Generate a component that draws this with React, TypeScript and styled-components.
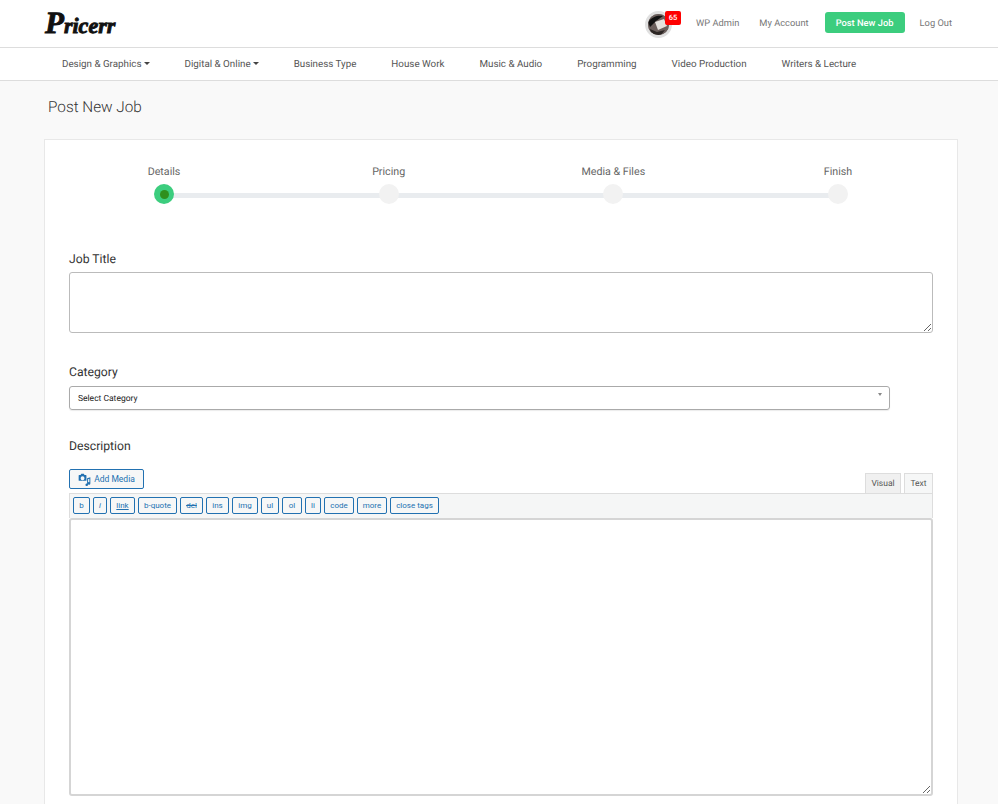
import React from "react";
import styled, { createGlobalStyle } from "styled-components";

const GlobalStyle = createGlobalStyle`
  html, body { margin: 0; padding: 0; height: 100%; overflow: hidden; background: #f9f9f9; }
  * { box-sizing: border-box; }
  body {
    font-family: Roboto, "Liberation Sans", sans-serif;
    color: #444;
    text-rendering: geometricPrecision;
  }
`;

const Page = styled.div`
  height: 804px;
  overflow: hidden;
`;

const Header = styled.header`
  height: 48px;
  background: #fff;
  border-bottom: 1px solid #ddd;
  display: flex;
  align-items: center;
  padding: 0 46px 0 45px;
`;

const Logo = styled.div`
  font-family: "Liberation Serif", serif;
  font-style: italic;
  font-weight: 700;
  font-size: 22px;
  line-height: 30px;
  color: #111;
  -webkit-text-stroke: 0.9px #111;
  margin-top: 2px;

  &::first-letter {
    font-size: 31px;
  }
`;

const HeaderRight = styled.div`
  margin-left: auto;
  margin-top: -2px;
  display: flex;
  align-items: center;
`;

const AvatarWrap = styled.div`
  position: relative;
  width: 27px;
  height: 27px;
  margin: 4px 24px 0 0;
`;

const Avatar = styled.div`
  width: 27px;
  height: 27px;
  border-radius: 50%;
  border: 3px solid #e0e0e0;
  overflow: hidden;
  background: #6b5f5c;
`;

const Badge = styled.span`
  position: absolute;
  top: 0;
  left: 20px;
  width: 16px;
  height: 14px;
  background: #fe0000;
  color: #fff;
  border-radius: 2px;
  font-size: 7.5px;
  font-weight: 500;
  line-height: 14px;
  text-align: center;
`;

const TopLink = styled.a<{ $gap?: number }>`
  font-size: 9.3px;
  color: #777;
  padding-top: 2px;
  margin-right: ${(p) => p.$gap ?? 0}px;
`;

const PostButton = styled.a`
  height: 21px;
  width: 80px;
  border-radius: 3px;
  background: #3ccd7e;
  color: #fff;
  font-size: 9.3px;
  font-weight: 500;
  line-height: 23px;
  text-align: center;
  margin-right: 15px;
`;

const Nav = styled.nav`
  height: 33px;
  background: #fff;
  border-bottom: 1px solid #ddd;
  display: flex;
  align-items: center;
  gap: 35px;
  padding: 0 62px;
`;

const NavItem = styled.a<{ $caret?: boolean }>`
  font-size: 9.8px;
  color: #555;
  white-space: nowrap;
  display: flex;
  align-items: center;

  ${(p) =>
    p.$caret &&
    `&::after {
      content: "";
      margin-left: 2px;
      border-top: 3px solid #444;
      border-left: 3px solid transparent;
      border-right: 3px solid transparent;
      margin-top: -2px;
    }`}
`;

const Title = styled.h1`
  margin: 0;
  padding: 16px 0 0 48px;
  height: 58px;
  font-size: 15.3px;
  line-height: 20px;
  font-weight: 300;
  color: #333;
`;

const Card = styled.section`
  margin: 0 40px 0 44px;
  background: #fff;
  border: 1px solid #e8e8e8;
  padding: 24px 24px 40px;
`;

const Steps = styled.div`
  position: relative;
  display: flex;
  justify-content: space-between;
  margin: 0 60px;
  height: 87px;

  &::before {
    content: "";
    position: absolute;
    top: 29px;
    left: 35px;
    right: 35px;
    height: 5px;
    background: #e9ecef;
  }
`;

const Step = styled.div`
  position: relative;
  width: 70px;
  display: flex;
  flex-direction: column;
  align-items: center;
  font-size: 10.7px;
  line-height: 15px;
  color: #666;
  white-space: nowrap;
`;

const Dot = styled.span<{ $active?: boolean }>`
  width: 20px;
  height: 20px;
  margin-top: 5px;
  border-radius: 50%;
  background: ${(p) => (p.$active ? "#3ccd7e" : "#f2f2f2")};
  display: flex;
  align-items: center;
  justify-content: center;

  &::after {
    content: "";
    display: ${(p) => (p.$active ? "block" : "none")};
    width: 9px;
    height: 9px;
    border-radius: 50%;
    background: #2f8f1d;
  }
`;

const Label = styled.label`
  display: block;
  font-size: 12.2px;
  line-height: 16px;
  color: #333;
  margin-bottom: 5px;
`;

const TitleInput = styled.textarea`
  display: block;
  width: 100%;
  height: 61px;
  margin-bottom: 31px;
  border: 1px solid #bbb;
  border-radius: 3px;
  background: #fff;
`;

const SelectBox = styled.div`
  width: 821px;
  height: 24px;
  margin: 6px 0 28px;
  border: 1px solid #aaa;
  border-radius: 3px;
  display: flex;
  justify-content: space-between;
  padding: 0 7px 0 8px;
  font-size: 8.5px;
  line-height: 24px;
  color: #222;
  box-shadow: 0 1px 1px rgba(0, 0, 0, 0.08);

  &::after {
    content: "";
    margin-top: 6px;
    height: 0;
    border-top: 3px solid #888;
    border-left: 2px solid transparent;
    border-right: 2px solid transparent;
  }
`;

const EditorTop = styled.div`
  display: flex;
  justify-content: space-between;
  align-items: flex-end;
  margin-top: 15px;
`;

const MediaButton = styled.button`
  height: 20px;
  width: 75px;
  padding: 0;
  margin-bottom: 4px;
  border: 1px solid #2271b1;
  border-radius: 2px;
  background: #f6f7f7;
  color: #2271b1;
  font: 8.5px Roboto, sans-serif;
  display: flex;
  align-items: center;
  justify-content: center;
  gap: 3px;
`;

const Tabs = styled.div`
  display: flex;
  gap: 3px;
`;

const Tab = styled.div<{ $w: number; $on?: boolean }>`
  width: ${(p) => p.$w}px;
  height: 20px;
  border: 1px solid #ddd;
  border-bottom: 0;
  background: ${(p) => (p.$on ? "#f0f0f0" : "#f6f7f7")};
  color: #555;
  font-size: 8.5px;
  line-height: 20px;
  text-align: center;
`;

const Toolbar = styled.div`
  height: 25px;
  background: #f5f6f6;
  border: 1px solid #ddd;
  border-bottom: 0;
  display: flex;
  align-items: center;
  gap: 3px;
  padding: 0 3px 1px;
`;

const TagButton = styled.button<{ $w: number; $deco?: string; $italic?: boolean }>`
  flex: none;
  width: ${(p) => p.$w}px;
  height: 17px;
  padding: 0;
  border: 1px solid #2271b1;
  border-radius: 2px;
  background: #f6f7f7;
  color: #2271b1;
  font: ${(p) => (p.$italic ? "italic " : "")}8px Roboto, sans-serif;
  text-decoration: ${(p) => p.$deco ?? "none"};
`;

const EditorArea = styled.textarea`
  display: block;
  width: 100%;
  height: 278px;
  border: 2px solid #d5d5d5;
  border-radius: 3px;
  background: #fff;
`;

const tags: { t: string; w: number; deco?: string; italic?: boolean }[] = [
  { t: "b", w: 17 },
  { t: "i", w: 14, italic: true },
  { t: "link", w: 25, deco: "underline" },
  { t: "b-quote", w: 39 },
  { t: "del", w: 23, deco: "line-through" },
  { t: "ins", w: 23 },
  { t: "img", w: 26 },
  { t: "ul", w: 18 },
  { t: "ol", w: 20 },
  { t: "li", w: 16 },
  { t: "code", w: 30 },
  { t: "more", w: 30 },
  { t: "close tags", w: 49 },
];

const navItems = [
  { t: "Design & Graphics", caret: true },
  { t: "Digital & Online", caret: true },
  { t: "Business Type" },
  { t: "House Work" },
  { t: "Music & Audio" },
  { t: "Programming" },
  { t: "Video Production" },
  { t: "Writers & Lecture" },
];

const App: React.FC = () => {
  return (
    <Page>
      <GlobalStyle />
      <Header>
        <Logo>Pricerr</Logo>
        <HeaderRight>
          <AvatarWrap>
            <Avatar>
              <svg width="21" height="21" viewBox="0 0 21 21">
                <rect width="21" height="21" fill="#6b5f5c" />
                <path d="M0 8 C5 2 10 1 15 2 L8 7 L2 13 Z" fill="#111" />
                <path d="M7 8 L16 5 L19 12 L10 16 Z" fill="#e4e1dd" />
                <path d="M2 15 L9 18 L17 16 L13 21 L3 21 Z" fill="#2c2624" />
              </svg>
            </Avatar>
            <Badge>65</Badge>
          </AvatarWrap>
          <TopLink $gap={20}>WP Admin</TopLink>
          <TopLink $gap={16}>My Account</TopLink>
          <PostButton>Post New Job</PostButton>
          <TopLink>Log Out</TopLink>
        </HeaderRight>
      </Header>
      <Nav>
        {navItems.map((n) => (
          <NavItem key={n.t} $caret={n.caret}>
            {n.t}
          </NavItem>
        ))}
      </Nav>
      <Title>Post New Job</Title>
      <Card>
        <Steps>
          <Step>
            Details
            <Dot $active />
          </Step>
          <Step>
            Pricing
            <Dot />
          </Step>
          <Step>
            Media &amp; Files
            <Dot />
          </Step>
          <Step>
            Finish
            <Dot />
          </Step>
        </Steps>
        <Label>Job Title</Label>
        <TitleInput />
        <Label>Category</Label>
        <SelectBox>Select Category</SelectBox>
        <Label>Description</Label>
        <EditorTop>
          <MediaButton>
            <svg width="13" height="13" viewBox="0 0 20 20" fill="#2271b1">
              <path
                fillRule="evenodd"
                d="M5 1h4l1 2h2a1 1 0 0 1 1 1v7a1 1 0 0 1-1 1H2a1 1 0 0 1-1-1V4a1 1 0 0 1 1-1h2zm2 4a3 3 0 1 0 0 6 3 3 0 0 0 0-6z"
              />
              <path d="M14 8l5-1.500V16a2 2 0 1 1-1.500-1.900V9l-2 .6V18a2 2 0 1 1-1.500-1.900z" />
            </svg>
            Add Media
          </MediaButton>
          <Tabs>
            <Tab $w={36} $on>
              Visual
            </Tab>
            <Tab $w={29}>Text</Tab>
          </Tabs>
        </EditorTop>
        <Toolbar>
          {tags.map((b) => (
            <TagButton key={b.t} $w={b.w} $deco={b.deco} $italic={b.italic}>
              {b.t}
            </TagButton>
          ))}
        </Toolbar>
        <EditorArea />
      </Card>
    </Page>
  );
};

export default App;
